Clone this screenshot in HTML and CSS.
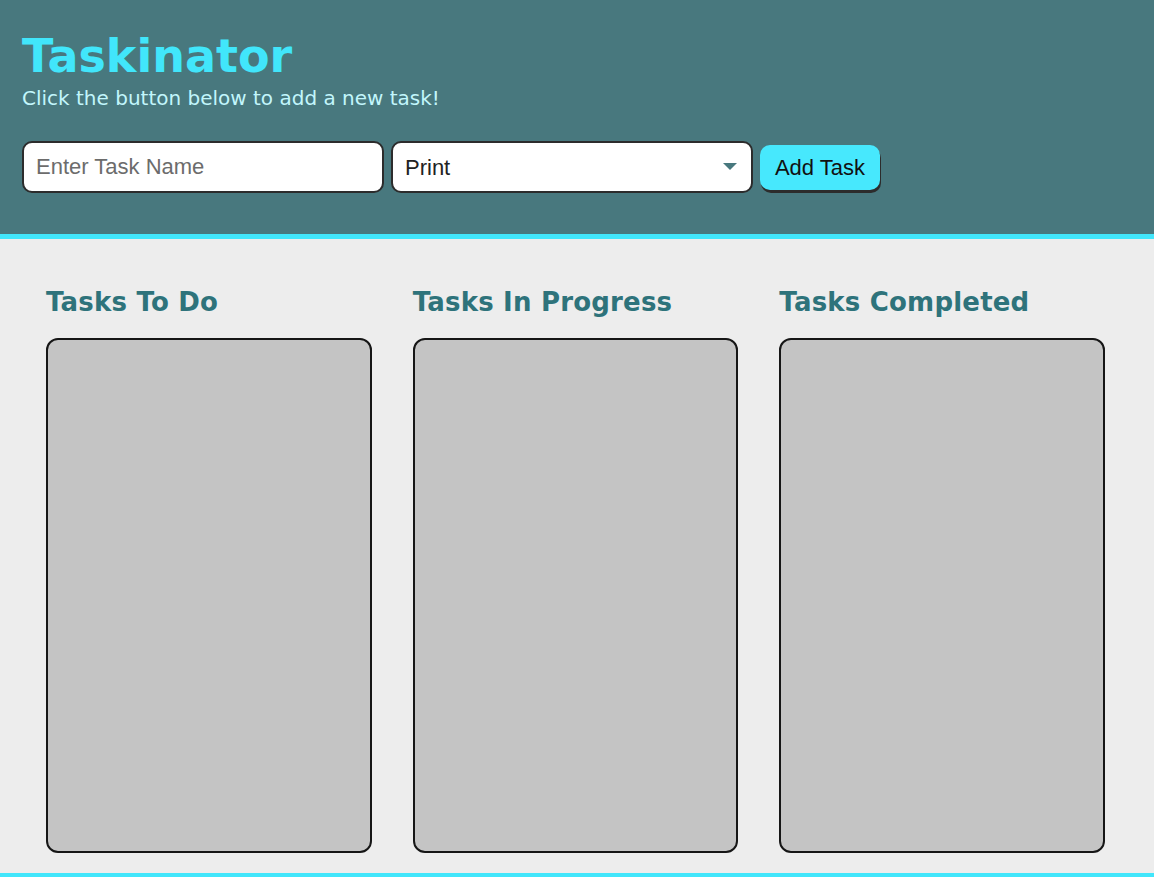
FILE: index.html
```html
<!DOCTYPE html>
<html lang="en">
<head>
<meta charset="utf-8">
<title>Taskinator</title>
<link rel="stylesheet" href="styles.css">
</head>
<body>
<header class="header">
  <h1 class="page-title">Taskinator</h1>
  <p class="page-sub">Click the button below to add a new task!</p>
  <form class="task-form">
    <input class="text-input" type="text" placeholder="Enter Task Name">
    <div class="select-wrap">
      <select class="select-input">
        <option>Print</option>
        <option>Web</option>
        <option>Mobile</option>
      </select>
      <svg class="select-arrow" width="14" height="8" viewBox="0 0 14 8"><path d="M0 0 H14 L7 7 Z" fill="#48787e"/></svg>
    </div>
    <button class="btn" type="button">Add Task</button>
  </form>
</header>
<main class="page-content">
  <section class="task-col">
    <h2 class="list-title">Tasks To Do</h2>
    <ul class="task-list"></ul>
  </section>
  <section class="task-col">
    <h2 class="list-title">Tasks In Progress</h2>
    <ul class="task-list"></ul>
  </section>
  <section class="task-col">
    <h2 class="list-title">Tasks Completed</h2>
    <ul class="task-list"></ul>
  </section>
</main>
<footer class="footer"></footer>
</body>
</html>
```

FILE: styles.css
```css
* { box-sizing: border-box; }
html, body { margin: 0; padding: 0; }
body {
  background: #ededed;
  font-family: "DejaVu Sans", Verdana, sans-serif;
}
.header {
  background: #48787e;
  border-bottom: 5px solid #41e6fb;
  padding: 28px 22px 0;
  height: 239px;
}
.page-title {
  margin: 0;
  font-size: 46px;
  font-weight: bold;
  line-height: 56px;
  color: #41e6fb;
}
.page-sub {
  margin: 0;
  font-size: 20px;
  line-height: 28px;
  color: #c2f6fc;
}
.task-form {
  display: flex;
  align-items: flex-end;
  gap: 7px;
  margin-top: 29px;
}
.text-input, .select-input {
  width: 362px;
  height: 52px;
  border: 2px solid #2c2c2c;
  border-radius: 10px;
  background: #fff;
  font-family: "Liberation Sans", Arial, sans-serif;
  font-size: 22px;
  padding: 0 12px;
  outline: none;
}
.text-input::placeholder { color: #6c6c6c; }
.select-wrap { position: relative; }
.select-input {
  appearance: none;
  -webkit-appearance: none;
  color: #222;
}
.select-arrow {
  position: absolute;
  right: 16px;
  top: 22px;
  pointer-events: none;
}
.btn {
  width: 120px;
  height: 45px;
  margin-bottom: 3px;
  padding: 0;
  border: none;
  border-radius: 10px;
  background: #47e8fd;
  box-shadow: 1px 3px 0 #2c2c2c;
  font-family: "Liberation Sans", Arial, sans-serif;
  font-size: 22px;
  color: #111;
}
.page-content {
  display: grid;
  grid-template-columns: repeat(3, 1fr);
  column-gap: 41px;
  padding: 46px 49px 20px 46px;
}
.list-title {
  margin: 0 0 19px;
  font-size: 26px;
  line-height: 34px;
  font-weight: bold;
  color: #2e737b;
  letter-spacing: 0.2px;
}
.task-list {
  margin: 0;
  padding: 0;
  list-style: none;
  height: 515px;
  background: #c4c4c4;
  border: 2px solid #161616;
  border-radius: 12px;
}
.footer {
  border-top: 4px solid #41e6fb;
  height: 20px;
}
```
